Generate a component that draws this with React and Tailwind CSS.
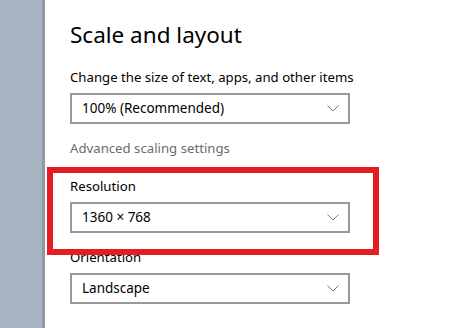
// one dropdown box - gray 2px border, value on the left, thin chevron on the right
function Select({ value }) {
  return (
    <div className="flex h-[31px] w-[280px] items-center justify-between border-2 border-[#999999] bg-white pl-[10px] pr-[9px]">
      <span className="text-[13.5px] text-black">{value}</span>
      <svg width="12" height="7" viewBox="0 0 12 7" className="text-[#7a7a7a]">
        <polyline points="0.5,0.5 6,6 11.5,0.5" fill="none" stroke="currentColor" strokeWidth="1" />
      </svg>
    </div>
  )
}

export default function App() {
  return (
    <div
      className="flex h-[328px] w-[466px] overflow-hidden bg-white"
      style={{ fontFamily: '"Segoe UI", "Noto Sans", "Open Sans", sans-serif' }}
    >
      {/* left strip of the window behind */}
      <div className="h-full w-[45px] shrink-0 border-r-[3px] border-[#8f99a5] bg-[#a8b4c2]" />

      <div className="relative flex-1 pl-[25px] pt-[20px]">
        <h1 className="text-[22.5px] leading-[30px] text-black">Scale and layout</h1>

        <p className="mt-[17px] text-[13.2px] leading-[20px] text-black">
          Change the size of text, apps, and other items
        </p>
        <div className="mt-[6px]">
          <Select value="100% (Recommended)" />
        </div>

        <p className="mt-[14px] text-[13.2px] leading-[20px] text-[#6b6b6b]">
          Advanced scaling settings
        </p>

        <p className="mt-[18px] text-[13.2px] leading-[20px] text-black">Resolution</p>
        <div className="mt-[6px]">
          <Select value="1360 × 768" />
        </div>

        <p className="mt-[14px] text-[13.2px] leading-[20px] text-black">Orientation</p>
        <div className="mt-[6px]">
          <Select value="Landscape" />
        </div>

        {/* red highlight drawn over the resolution block */}
        <div className="absolute left-[2px] top-[167px] h-[88px] w-[332px] border-[6px] border-[#e51c23]" />
      </div>
    </div>
  )
}
